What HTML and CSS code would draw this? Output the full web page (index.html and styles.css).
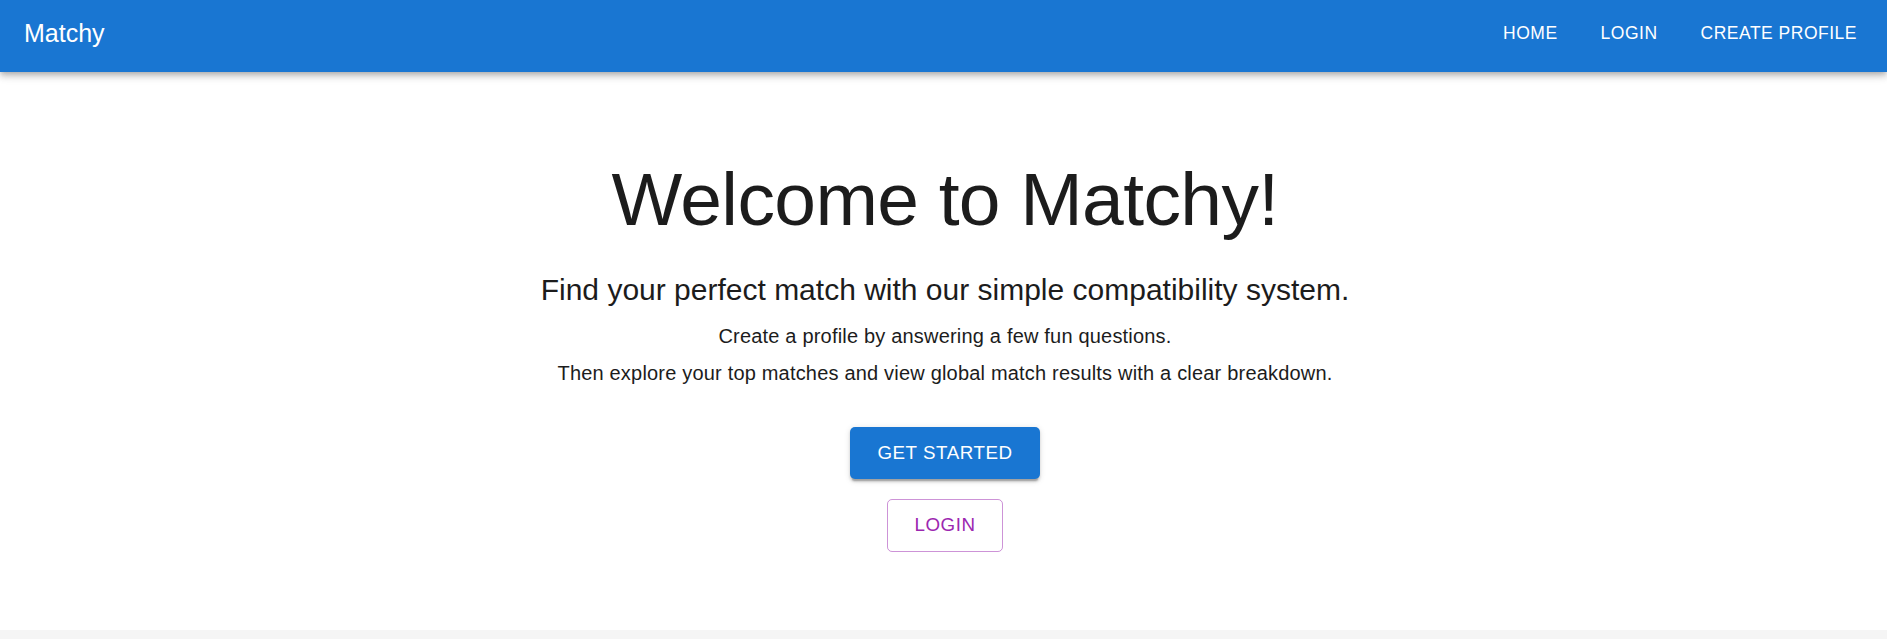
FILE: index.html
```html
<!DOCTYPE html>
<html lang="en">
<head>
<meta charset="utf-8">
<title>Matchy</title>
<link rel="stylesheet" href="styles.css">
</head>
<body>
<header class="appbar">
  <div class="toolbar">
    <div class="brand">Matchy</div>
    <nav class="nav">
      <a class="nav-btn" href="#">Home</a>
      <a class="nav-btn" href="#">Login</a>
      <a class="nav-btn" href="#">Create Profile</a>
    </nav>
  </div>
</header>
<main class="hero">
  <h1 class="title">Welcome to Matchy!</h1>
  <h2 class="subtitle">Find your perfect match with our simple compatibility system.</h2>
  <p class="body">Create a profile by answering a few fun questions.</p>
  <p class="body">Then explore your top matches and view global match results with a clear breakdown.</p>
  <div class="actions">
    <a class="btn btn-contained" href="#">Get Started</a>
    <a class="btn btn-outlined" href="#">Login</a>
  </div>
</main>
</body>
</html>
```
FILE: styles.css
```css
html, body {
  margin: 0;
  padding: 0;
}
body {
  background: #f5f5f5;
  font-family: "Liberation Sans", Arial, sans-serif;
  color: #1c1c1c;
}
.appbar {
  position: relative;
  z-index: 2;
  background: #1976d2;
  color: #fff;
  box-shadow: 0 2.5px 5px -1.25px rgba(0,0,0,0.2), 0 5px 6px 0 rgba(0,0,0,0.14), 0 1.25px 12.5px 0 rgba(0,0,0,0.12);
}
.toolbar {
  height: 72px;
  box-sizing: border-box;
  display: flex;
  align-items: center;
  justify-content: space-between;
  padding: 0 20px 6px 24px;
}
.brand {
  font-size: 25px;
  line-height: 1.6;
  font-weight: 400;
}
.nav {
  display: flex;
  align-items: center;
  gap: 23px;
}
.nav-btn {
  color: #fff;
  text-decoration: none;
  text-transform: uppercase;
  font-size: 17.5px;
  letter-spacing: 0.5px;
  line-height: 1.75;
  padding: 7.5px 10px;
  font-weight: 500;
}
.hero {
  background: #fff;
  text-align: center;
  padding: 82px 0 78px 3px;
}
.title {
  margin: 0 0 26px;
  font-size: 75px;
  line-height: 1.2;
  font-weight: 400;
  letter-spacing: -0.6px;
}
.subtitle {
  margin: 0 0 10.5px;
  font-size: 30px;
  line-height: 1.334;
  font-weight: 400;
}
.body {
  margin: 0 0 7px;
  font-size: 20px;
  line-height: 1.5;
  letter-spacing: 0.19px;
}
.actions {
  margin-top: 39px;
  display: flex;
  flex-direction: column;
  align-items: center;
  gap: 20px;
}
.btn {
  text-decoration: none;
  text-transform: uppercase;
  font-size: 18.75px;
  letter-spacing: 0.54px;
  line-height: 1.75;
  border-radius: 5px;
  font-weight: 500;
}
.btn-contained {
  background: #1976d2;
  color: #fff;
  padding: 10px 27.5px;
  box-shadow: 0 3.75px 1.25px -2.5px rgba(0,0,0,0.2), 0 2.5px 2.5px 0 rgba(0,0,0,0.14), 0 1.25px 6.25px 0 rgba(0,0,0,0.12);
}
.btn-outlined {
  color: #9c27b0;
  border: 1px solid rgba(156,39,176,0.5);
  padding: 8.75px 26.25px;
}
```
